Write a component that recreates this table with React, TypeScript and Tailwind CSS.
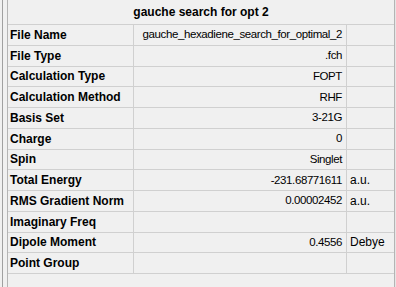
import React from 'react';

type Row = { label: string; value?: string; unit?: string };

const rows: Row[] = [
  { label: 'File Name', value: 'gauche_hexadiene_search_for_optimal_2' },
  { label: 'File Type', value: '.fch' },
  { label: 'Calculation Type', value: 'FOPT' },
  { label: 'Calculation Method', value: 'RHF' },
  { label: 'Basis Set', value: '3-21G' },
  { label: 'Charge', value: '0' },
  { label: 'Spin', value: 'Singlet' },
  { label: 'Total Energy', value: '-231.68771611', unit: 'a.u.' },
  { label: 'RMS Gradient Norm', value: '0.00002452', unit: 'a.u.' },
  { label: 'Imaginary Freq' },
  { label: 'Dipole Moment', value: '0.4556', unit: 'Debye' },
  { label: 'Point Group' },
];

export default function App() {
  return (
    <div
      className="flex h-[287px] w-[396px] overflow-hidden bg-[#f0f0f0] text-[12px] text-black"
      style={{ fontFamily: '"Liberation Sans", Arial, sans-serif' }}
    >
      <div className="w-[2px] shrink-0" />
      <div className="w-[5px] shrink-0 border-l border-[#a0a0a0]" />
      <div className="flex w-[388px] shrink-0 flex-col border-l border-r border-[#b4b4b4]">
        {/* header */}
        <div className="flex h-[25px] shrink-0 items-center justify-center border-b border-[#d0d0d0] pb-[1px] font-bold">
          gauche search for opt 2
        </div>

        {rows.map((r) => (
          <div key={r.label} className="grid h-[20.75px] shrink-0 grid-cols-[126px_213px_1fr] border-b border-[#d0d0d0]">
            <div className="flex items-center border-r border-[#d0d0d0] pl-[2px] font-bold">{r.label}</div>
            <div className="flex items-center justify-end border-r border-[#d0d0d0] pr-[4px] text-[11.5px] tracking-[-0.4px]">
              {r.value}
            </div>
            <div className="flex items-center pl-[3px]">{r.unit}</div>
          </div>
        ))}
      </div>
      <div className="w-[1px] shrink-0 bg-[#e6e6e6]" />
    </div>
  );
}
